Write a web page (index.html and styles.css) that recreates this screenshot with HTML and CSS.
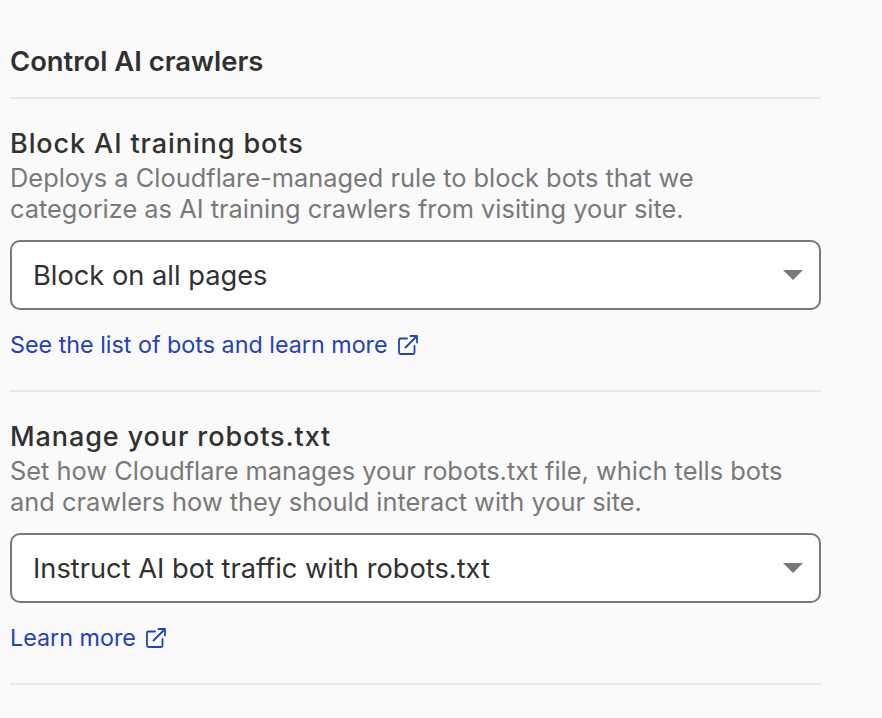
FILE: index.html
```html
<!DOCTYPE html>
<html lang="en">

<head>
    <meta charset="UTF-8">
    <meta name="viewport" content="width=device-width, initial-scale=1.0">
    <title>Control AI crawlers</title>
    <link rel="stylesheet" href="styles.css">
</head>

<body>
    <div class="wrap">
        <h2 class="title">Control AI crawlers</h2>

        <section class="setting">
            <h3>Block AI training bots</h3>
            <p>Deploys a Cloudflare-managed rule to block bots that we<br>categorize as AI training crawlers from visiting your site.</p>
            <div class="select">
                <span>Block on all pages</span>
                <i class="caret"></i>
            </div>
            <a class="more" href="#">See the list of bots and learn more
                <svg viewBox="0 0 22 22" width="22" height="22" fill="none" stroke="currentColor" stroke-width="1.8" stroke-linecap="round" stroke-linejoin="round">
                    <path d="M10 4.5H3.5a1.5 1.5 0 0 0-1.5 1.5v12.5a1.5 1.5 0 0 0 1.5 1.5H16a1.5 1.5 0 0 0 1.5-1.5V12"/>
                    <path d="M8.5 13.5L20 2M13.5 2H20v6.5"/>
                </svg>
            </a>
        </section>

        <section class="setting">
            <h3>Manage your robots.txt</h3>
            <p>Set how Cloudflare manages your robots.txt file, which tells bots<br>and crawlers how they should interact with your site.</p>
            <div class="select">
                <span>Instruct AI bot traffic with robots.txt</span>
                <i class="caret"></i>
            </div>
            <a class="more" href="#">Learn more
                <svg viewBox="0 0 22 22" width="22" height="22" fill="none" stroke="currentColor" stroke-width="1.8" stroke-linecap="round" stroke-linejoin="round">
                    <path d="M10 4.5H3.5a1.5 1.5 0 0 0-1.5 1.5v12.5a1.5 1.5 0 0 0 1.5 1.5H16a1.5 1.5 0 0 0 1.5-1.5V12"/>
                    <path d="M8.5 13.5L20 2M13.5 2H20v6.5"/>
                </svg>
            </a>
        </section>
    </div>
</body>

</html>
```

FILE: styles.css
```css
* {
    margin: 0;
    padding: 0;
    box-sizing: border-box;
}

body {
    background: #fafafa;
    font-family: Inter, "Liberation Sans", sans-serif;
    color: #313131;
}

.wrap {
    width: 811px;
    margin-left: 10px;
    padding-top: 44px;
}

.title {
    height: 55px;
    font-size: 27.4px;
    line-height: 34px;
    font-weight: 600;
    border-bottom: 2px solid #e8e8e8;
}

.setting {
    height: 293px;
    padding-top: 27px;
    border-bottom: 2px solid #e8e8e8;
}

.setting h3 {
    font-size: 27px;
    line-height: 36px;
    font-weight: 500;
    letter-spacing: 0.9px;
}

.setting p {
    font-size: 25.4px;
    line-height: 31px;
    color: #797979;
}

.select {
    display: flex;
    align-items: center;
    justify-content: space-between;
    height: 70px;
    margin-top: 16px;
    padding: 0 16px 0 21px;
    background: #fff;
    border: 2px solid #797979;
    border-radius: 10px;
    font-size: 27.25px;
}

.caret {
    width: 0;
    height: 0;
    border-left: 10px solid transparent;
    border-right: 10px solid transparent;
    border-top: 10px solid #797979;
}

.more {
    display: flex;
    align-items: center;
    gap: 9px;
    margin-top: 19px;
    font-size: 23.3px;
    line-height: 32px;
    color: #2540bd;
    text-decoration: none;
}
```
